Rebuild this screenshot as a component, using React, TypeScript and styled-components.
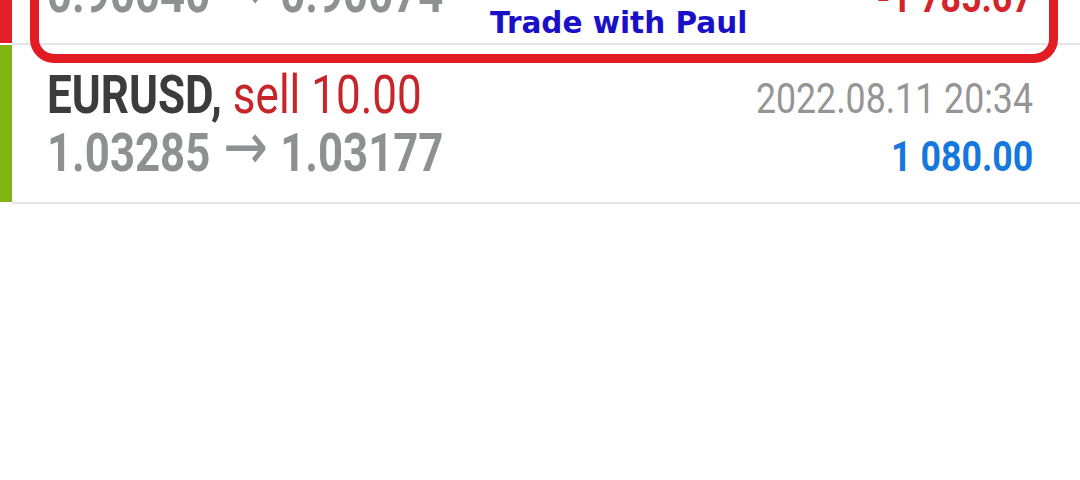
import React from "react";
import styled, { createGlobalStyle } from "styled-components";

const GlobalStyle = createGlobalStyle`
  html, body {
    margin: 0;
    padding: 0;
    background: #ffffff;
    overflow: hidden;
  }
  body {
    font-family: Roboto, "Liberation Sans", sans-serif;
  }
`;

const Screen = styled.div`
  width: 1080px;
  height: 480px;
  overflow: hidden;
  background: #ffffff;
`;

// the list is scrolled so that only the tail of the first trade shows
const TradeList = styled.div`
  display: flex;
  flex-direction: column;
  margin-top: -114px;
`;

const Row = styled.div`
  position: relative;
  display: flex;
`;

const Accent = styled.div<{ $color: string }>`
  width: 12px;
  flex: none;
  margin-bottom: 2px;
  background: ${(p) => p.$color};
`;

const Body = styled.div`
  flex: 1;
  display: grid;
  grid-template-columns: 1fr auto;
  grid-template-rows: 57px 57px;
  align-items: baseline;
  padding: 22px 47px 21px 35px;
  border-bottom: 2px solid #e5e5e5;
`;

// Roboto squeezed to stand in for the condensed face of the app
const Narrow = styled.span<{ $right?: boolean; $scale?: number }>`
  display: inline-block;
  white-space: nowrap;
  transform: scaleX(${(p) => p.$scale ?? 0.85});
  transform-origin: ${(p) => (p.$right ? "right" : "left")} center;
`;

const Title = styled.div`
  font-size: 53px;
  line-height: 57px;
`;

const Symbol = styled.span`
  font-weight: 700;
  color: #3c3c3c;
`;

const Side = styled.span`
  font-weight: 400;
  color: #c8252b;
`;

const Prices = styled.div`
  font-size: 54px;
  line-height: 57px;
  font-weight: 700;
  color: #8e9092;
`;

const Arrow = styled.span`
  font-family: "DejaVu Sans", sans-serif;
  font-weight: 400;
  font-size: 66px;
  line-height: 0;
  margin: 0 15px 0 16px;
  position: relative;
  top: -2px;
`;

const Time = styled.div`
  justify-self: end;
  font-size: 42px;
  line-height: 57px;
  color: #959595;
`;

const Profit = styled.div<{ $loss?: boolean }>`
  justify-self: end;
  font-size: 42px;
  line-height: 57px;
  font-weight: 700;
  color: ${(p) => (p.$loss ? "#d42329" : "#1677dc")};
`;

const Highlight = styled.div`
  position: absolute;
  left: 30px;
  right: 22px;
  top: 30px;
  bottom: -18px;
  border: 9px solid #e31c24;
  border-radius: 24px;
  display: flex;
  align-items: flex-end;
  padding: 0 0 14px 451px;
  pointer-events: none;
`;

const Label = styled.span`
  font-family: "DejaVu Sans", "Open Sans", sans-serif;
  font-weight: 700;
  font-size: 29.5px;
  color: #1a10c8;
  white-space: nowrap;
`;

type Trade = {
  symbol: string;
  side: string;
  time: string;
  open: string;
  close: string;
  profit: string;
  accent: string;
};

const trades: Trade[] = [
  {
    symbol: "AUDCAD",
    side: "buy 10.00",
    time: "2022.08.11 19:52",
    open: "0.90040",
    close: "0.90074",
    profit: "-1 785.67",
    accent: "#e11f26",
  },
  {
    symbol: "EURUSD",
    side: "sell 10.00",
    time: "2022.08.11 20:34",
    open: "1.03285",
    close: "1.03177",
    profit: "1 080.00",
    accent: "#7fb414",
  },
];

const TradeRow = ({ trade, marked }: { trade: Trade; marked?: boolean }) => (
  <Row>
    <Accent $color={trade.accent} />
    <Body>
      <Title>
        <Narrow $scale={0.83}>
          <Symbol>{trade.symbol},</Symbol> <Side>{trade.side}</Side>
        </Narrow>
      </Title>
      <Time>
        <Narrow $right>{trade.time}</Narrow>
      </Time>
      <Prices>
        <Narrow $scale={0.81}>
          {trade.open}
          <Arrow>→</Arrow>
          {trade.close}
        </Narrow>
      </Prices>
      <Profit $loss={trade.profit.startsWith("-")}>
        <Narrow $right>{trade.profit}</Narrow>
      </Profit>
    </Body>
    {marked && (
      <Highlight>
        <Label>Trade with Paul</Label>
      </Highlight>
    )}
  </Row>
);

export default function App() {
  return (
    <Screen>
      <GlobalStyle />
      <TradeList>
        {trades.map((t, i) => (
          <TradeRow key={t.symbol} trade={t} marked={i === 0} />
        ))}
      </TradeList>
    </Screen>
  );
}
